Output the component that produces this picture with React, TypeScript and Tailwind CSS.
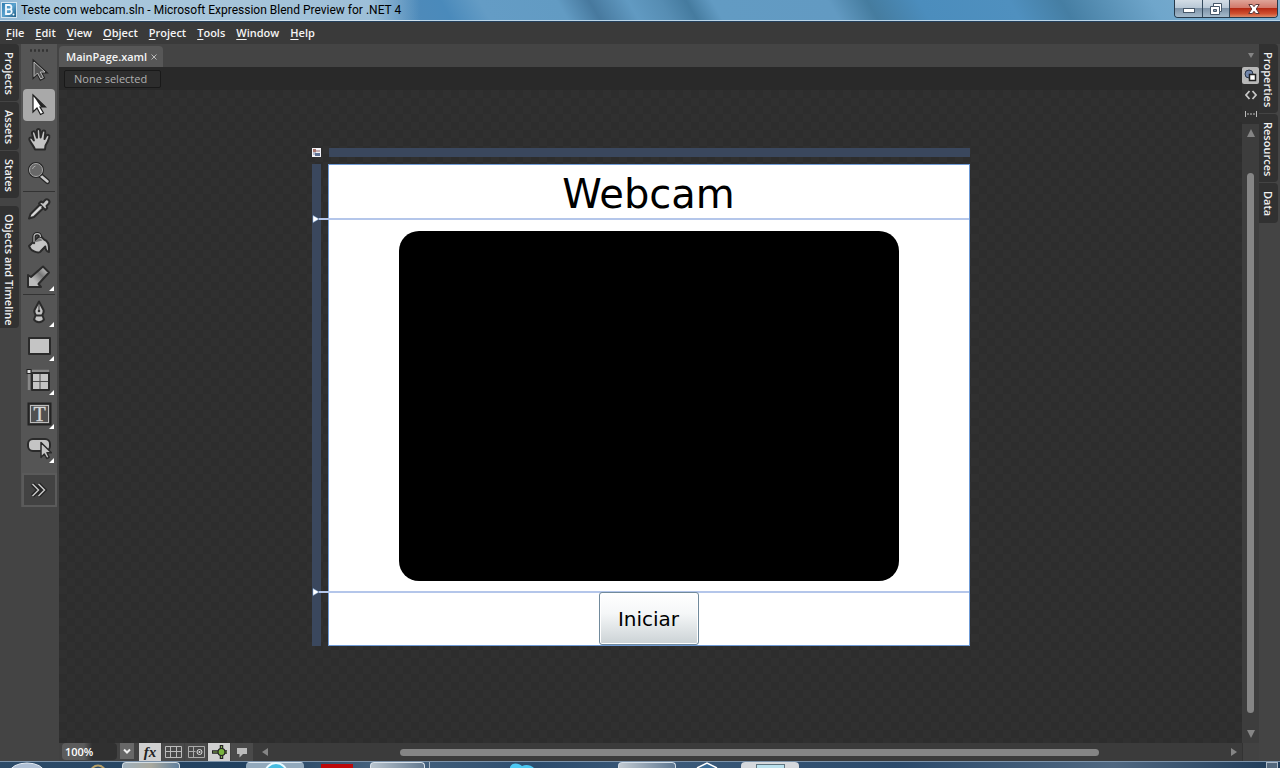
import type { ReactNode } from "react";

const menus = ["File", "Edit", "View", "Object", "Project", "Tools", "Window", "Help"];

const icon = { fill: "#c4c4c4", stroke: "#2a2a2a", strokeWidth: 2, strokeLinejoin: "round" as const };

function Icon({ children }: { children: ReactNode }) {
  return (
    <svg viewBox="0 0 26 26" className="size-[26px]" aria-hidden="true">
      {children}
    </svg>
  );
}

type ToolProps = { label: string; active?: boolean; more?: boolean; children: ReactNode };

function Tool({ label, active, more, children }: ToolProps) {
  return (
    <button
      aria-label={label}
      className={
        "relative my-px flex h-8 w-8 items-center justify-center rounded-sm " + (active ? "bg-[#a9a9a9]" : "")
      }
    >
      <Icon>{children}</Icon>
      {more && (
        <svg viewBox="0 0 5 5" className="absolute right-px bottom-0.5 size-[5px]" aria-hidden="true">
          <path d="M5 0V5H0z" fill="#fff" />
        </svg>
      )}
    </button>
  );
}

function SideTab({ label, className }: { label: string; className: string }) {
  return (
    <button
      className={
        "flex w-[19px] items-center justify-start bg-[#313131] pt-2 pr-0.5 text-[11px] leading-4 font-semibold text-[#f0f0f0] [writing-mode:vertical-rl] " +
        className
      }
    >
      {label}
    </button>
  );
}

function Arrow({ d }: { d: string }) {
  return (
    <svg viewBox="0 0 8 8" className="size-2" aria-hidden="true">
      <path d={d} fill="#858585" />
    </svg>
  );
}

function TitleBar() {
  return (
    <header className="relative flex h-[22px] shrink-0 items-start justify-between overflow-hidden border-b border-[#24405c] bg-[linear-gradient(60deg,#76a7cb_0%,#4d8aba_33%,#4a8abb_35%,#649cc5_38%,#629bc3_44%,#47799e_46.5%,#619ac2_49.5%,#568db3_52%,#457b9f_54%,#629bc3_56%,#629ac2_65%,#457c9f_68%,#4b8dbd_72%,#4f90bf_79%,#457ea3_83%,#6fa6cb_90%,#83b3d3_100%)] text-black">
      <div className="flex h-[21px] w-[420px] items-center gap-1 border-b border-[#cfe0ec] bg-[linear-gradient(90deg,#8fb6d3_0%,#a9c8dd_10%,#a6c4d9_60%,#9dbfd8_88%,transparent_100%)] pl-px">
        <svg viewBox="0 0 16 16" className="size-4" aria-hidden="true">
          <defs>
            <linearGradient id="app" x1="0" y1="0" x2="1" y2="1">
              <stop offset="0" stopColor="#2c79ad" />
              <stop offset=".5" stopColor="#5ba3cf" />
              <stop offset="1" stopColor="#1a577f" />
            </linearGradient>
          </defs>
          <rect x=".5" y=".5" width="15" height="15" fill="url(#app)" stroke="#d4e5f0" />
          <path
            d="M5 3h3.2a2.2 2.2 0 0 1 1 4.2A2.5 2.5 0 0 1 8.400 12H5zM5 7.300h3.500"
            fill="none"
            stroke="#f1f9ff"
            strokeWidth="1.800"
          />
          <circle cx="12.500" cy="12.500" r="1" fill="#fff" />
        </svg>
        <h1 className="[font-family:Roboto,'Open_Sans',sans-serif] text-[12px] leading-4 whitespace-nowrap">
          Teste com webcam.sln - Microsoft Expression Blend Preview for .NET 4
        </h1>
      </div>
      <div className="flex h-[21px] flex-1 justify-end border-b border-[#b9d3e6] pr-0.5">
        <div className="flex h-[18px] overflow-hidden rounded-b border border-t-0 border-[#26394a]">
          <button
            aria-label="Minimize"
            className="flex w-[28px] items-end justify-center border-r border-[#33495c] bg-[linear-gradient(#d3dde6_0,#b9c8d6_45%,#7e93a8_50%,#a5bacb_100%)] pb-1"
          >
            <svg viewBox="0 0 12 5" className="h-[5px] w-3" aria-hidden="true">
              <rect x=".5" y=".5" width="11" height="4" fill="#fff" stroke="#47586a" />
            </svg>
          </button>
          <button
            aria-label="Restore"
            className="flex w-[27px] items-center justify-center border-r border-[#33495c] bg-[linear-gradient(#d3dde6_0,#b9c8d6_45%,#7e93a8_50%,#a5bacb_100%)]"
          >
            <svg viewBox="0 0 12 12" className="size-3" aria-hidden="true">
              <path d="M3.500.5h8v8h-2v3h-9v-8h3z" fill="#fff" stroke="#47586a" />
              <path d="M3.500.5v3M9.500 8.500v-5h-6" fill="none" stroke="#47586a" />
              <path d="M3.500 6.500h3v2h-3z" fill="#8fa1b1" stroke="#47586a" />
            </svg>
          </button>
          <button
            aria-label="Close"
            className="flex w-[47px] items-center justify-center bg-[linear-gradient(#dfa498_0,#d2796a_45%,#b52a14_50%,#cf5030_80%,#db8a68_100%)]"
          >
            <svg viewBox="0 0 12 10" className="h-2.5 w-3" aria-hidden="true">
              <path
                d="M.8.5h3.500L6 2.700 7.700.5h3.500L8.200 5l3.100 4.500H7.700L6 7.300 4.300 9.500H.7L3.800 5z"
                fill="#fff"
                stroke="#5c3a3a"
              />
            </svg>
          </button>
        </div>
      </div>
    </header>
  );
}

function Toolbar() {
  const arrow = "M7 3v17l4-4 3.500 6.500 3-1.500-3.500-6h5.500z";
  return (
    <div className="ml-0.5 flex w-9 flex-col items-center self-start bg-[#555] pt-[5px]" role="toolbar" aria-label="Tools">
      <div className="mb-0.5 h-[3px] w-5 bg-[radial-gradient(circle_at_center,#333_1px,transparent_1.500px)] bg-[length:4px_3px]" />
      <Tool label="Selection">
        <path d="M8 4v14.500l3.500-3.500 3.200 6 2.600-1.400-3-5.600h4.700z" fill="#5a5a5a" stroke="#242424" strokeWidth="3" />
        <path d="M8 4v14.500l3.500-3.500 3.200 6 2.600-1.400-3-5.600h4.700z" fill="#555" stroke="#bbb" strokeWidth="1" />
      </Tool>
      <Tool label="Direct selection" active>
        <path d={arrow} fill="#fff" stroke="#1c1c1c" strokeWidth="1.200" />
        <path d="M7.500 4l11.500 11h-4z" fill="#222" />
      </Tool>
      <Tool label="Pan">
        <path
          d="M9 23.500C8 20.500 5.500 18 3.500 14c-.8-2.300 1.800-3.400 3-1.500l1.400 2L6 7.500c-.3-2.400 2.600-3 3.300-.7l1.700 5-.2-7c.2-2.400 3.100-2.400 3.300 0l.5 6.700 1.500-5.700c.8-2.100 3.500-1.500 3.200.7L18.500 13l1.700-3.200c1.200-1.800 3.700-.7 3.100 1.400-1 3.400-2.300 6-3.800 8.300l-.5 4z"
          {...icon}
        />
      </Tool>
      <Tool label="Zoom">
        <path d="m14 15 7.500 6.500" stroke="#262626" strokeWidth="5" strokeLinecap="round" />
        <path d="m15 16 6.500 5.500" stroke="#c9c9c9" strokeWidth="2.500" strokeLinecap="round" />
        <circle cx="10" cy="10" r="6.500" fill="#686868" stroke="#262626" strokeWidth="3" />
        <circle cx="10" cy="10" r="6.500" fill="#686868" stroke="#a9a9a9" strokeWidth="1" />
        <path d="M6.500 9a4 4 0 0 1 3-3" fill="none" stroke="#aaa" />
      </Tool>
      <hr className="h-0.5 w-8 border-0 border-b border-[#333] bg-[#555]" />
      <Tool label="Eyedropper">
        <path d="m3 22.500 1.500-4.500L14.500 8l3.500 3.500L8 21z" {...icon} />
        <path d="m13 7.500 2-2 2 1 2-2.300c2.200-2.400 6 .8 3.700 3.600l-2.200 2.200.8 2-2 2z" {...icon} />
        <path d="m5.500 20 10-10" stroke="#eee" />
      </Tool>
      <Tool label="Paint bucket">
        <path d="M8 12.500V7c0-4.500 6.500-4.500 6.500 0v3" fill="none" stroke="#222" strokeWidth="3.500" />
        <path
          d="M3 16 13 6.500c2.500.3 4 1.300 5 3 3.500.8 5.500 4.500 5 12.500-2.300-.3-3.500-2.500-3.700-5.500L14 22c-2.500 1.500-9.500-1-11-6z"
          {...icon}
        />
        <path d="M8 13V7c0-4.500 6.500-4.500 6.500 0" fill="none" stroke="#bbb" strokeWidth="1.200" />
        <path d="m8 12.500 4.500-4.500c1.500 0 3 1 4 2.500z" fill="#777" />
        <circle cx="8" cy="13" r="1.200" fill="#333" />
      </Tool>
      <Tool label="Gradient" more>
        <defs>
          <linearGradient id="brush" x1="0" y1="1" x2="1" y2="0">
            <stop offset=".3" stopColor="#bbb" />
            <stop offset=".6" stopColor="#777" />
            <stop offset="1" stopColor="#ddd" />
          </linearGradient>
        </defs>
        <path d="M2 23V11l3 2L17 2.500l6 6L12.500 20l2.500 3z" {...icon} fill="url(#brush)" />
      </Tool>
      <hr className="h-0.5 w-8 border-0 border-t border-[#333] bg-[#555]" />
      <Tool label="Pen" more>
        <path d="m13 1.500 4.500 8.500c.8 2-.5 4-1.500 5.500h-6c-1-1.500-2.300-3.500-1.500-5.500zM9.500 15.500h7l1.500 4c-2 3.500-8 3.500-10 0z" {...icon} />
        <path d="M13 3v7" stroke="#333" />
        <circle cx="13" cy="11" r="1.300" fill="#333" />
      </Tool>
      <Tool label="Rectangle" more>
        <rect x="3" y="4" width="21" height="16" {...icon} />
      </Tool>
      <Tool label="Grid" more>
        <path d="M3 5v17M6 3h17" stroke="#888" strokeWidth="2.500" />
        <rect x="6" y="5" width="17" height="17" {...icon} />
        <path d="M14 6v15M7 13.500h15" stroke="#4a4a4a" strokeWidth="1" />
        <rect x="1" y="1.500" width="4" height="4" fill="#ddd" stroke="#222" />
      </Tool>
      <Tool label="Text" more>
        <rect x="2.500" y="1.500" width="22" height="21" fill="#505050" stroke="#232323" strokeWidth="2" />
        <rect x="4.500" y="3.500" width="18" height="17" fill="none" stroke="#bdbdbd" />
        <text
          x="13.500"
          y="19"
          textAnchor="middle"
          fill="#d6d6d6"
          stroke="#d6d6d6"
          strokeWidth=".4"
          className="[font-family:'Liberation_Serif',serif] text-[20px]"
        >
          T
        </text>
      </Tool>
      <Tool label="Button" more>
        <rect x="2" y="3" width="22" height="12" rx="5" {...icon} />
        <path d="M15 6.500v15l3.300-3.500 2.500 4.500 2.400-1.200-2.200-4.600h4.500z" {...icon} strokeWidth="1.500" />
      </Tool>
      <button
        aria-label="Show all tools"
        className="mt-[7px] flex h-[34px] w-[35px] items-center justify-center border-2 border-[#5a5a5a] bg-[#424242]"
      >
        <Icon>
          <path d="m6.500 7 6 6-6 6M12.500 7l6 6-6 6" fill="none" stroke="#222" strokeWidth="4" />
          <path d="m6.500 7 6 6-6 6M12.500 7l6 6-6 6" fill="none" stroke="#c6c6c6" strokeWidth="1.500" />
        </Icon>
      </button>
    </div>
  );
}

function Artboard() {
  const handle = (
    <svg viewBox="0 0 8 8" className="size-2" aria-hidden="true">
      <path d="M1 .5 7 4 1 7.500z" fill="#fff" stroke="#7fa6d8" strokeWidth=".5" />
    </svg>
  );
  return (
    <div className="grid grid-cols-[9px_642px] grid-rows-[9px_482px] gap-x-[7px] gap-y-[7px]">
      <svg viewBox="0 0 9 9" className="size-[9px]" aria-hidden="true">
        <path d="M0 0h9v9H0z" fill="#f2f2f6" />
        <path d="M1 1h3v3H1z" fill="#a8746c" />
        <path d="M4 2h4v2H4z" fill="#c3aeb2" />
        <path d="M1 4h3v3H1z" fill="#b9bccb" />
        <path d="M3 5h5v3H3z" fill="#5f7294" />
      </svg>
      <div className="ml-px bg-[#3a475d]" />
      <div className="relative bg-[#3a475d]">
        <div className="absolute top-[51px] left-0">{handle}</div>
        <div className="absolute top-[424px] left-0">{handle}</div>
      </div>
      <div className="relative flex flex-col border border-[#6f9bd6] bg-white [font-family:'DejaVu_Sans',sans-serif] text-black">
        <div className="absolute top-[53px] -left-2.5 h-0.5 w-[650px] bg-[#b4c6ea]" />
        <div className="absolute top-[426px] -left-2.5 h-0.5 w-[650px] bg-[#b4c6ea]" />
        <h2 className="flex h-[54px] items-center justify-center pt-1 text-[40px] leading-[48px]">Webcam</h2>
        <div className="mx-auto mt-3 h-[350px] w-[500px] rounded-[20px] bg-black" />
        <button className="relative z-10 mx-auto mt-[11px] h-[53px] w-[100px] rounded-[3px] border border-[#718a9c] bg-[linear-gradient(#ffffff,#f5f7f8_40%,#cbd2d5)] text-[20px] leading-6 inset-ring inset-ring-white">
          Iniciar
        </button>
      </div>
    </div>
  );
}

function StatusBar() {
  return (
    <footer className="flex h-[18px] shrink-0 items-stretch bg-[#424242]">
      <div className="mr-[5px] ml-[3px] flex w-[72px] gap-[3px] text-white">
        <input
          aria-label="Zoom level"
          defaultValue="100%"
          className="h-[17px] min-w-0 flex-1 rounded bg-[linear-gradient(90deg,#5c5c5c_40%,#303030_55%)] pl-[3px] text-[11px] leading-4 font-semibold outline-none"
        />
        <button aria-label="Zoom presets" className="flex h-4 w-3.5 items-center justify-center bg-[#686868]">
          <svg viewBox="0 0 8 8" className="size-2" aria-hidden="true">
            <path d="m1 2.500 3 3 3-3" fill="none" stroke="#eee" strokeWidth="2" />
          </svg>
        </button>
      </div>
      <div className="flex gap-px">
        <button aria-label="Effects" className="flex w-[22px] items-center justify-center bg-[#d0d0d0]">
          <span className="[font-family:'Liberation_Serif',serif] text-[15px] leading-4 font-bold text-[#222] italic">
            fx
          </span>
        </button>
        <button aria-label="Show grid" className="flex w-[22px] items-center justify-center bg-[#494949]">
          <svg viewBox="0 0 17 12" className="h-3 w-[17px]" aria-hidden="true">
            <path d="M.5.5h16v11H.5zM.5 5.500h16M5.500.5v11M11.500.5v11" fill="none" stroke="#bbb" />
          </svg>
        </button>
        <button aria-label="Snap to grid" className="flex w-[22px] items-center justify-center bg-[#494949]">
          <svg viewBox="0 0 17 12" className="h-3 w-[17px]" aria-hidden="true">
            <path d="M.5.5h16v11H.5zM.5 5.500h7M5.500.5v11" fill="none" stroke="#aaa" />
            <circle cx="11.500" cy="6" r="2.500" fill="#444" stroke="#ddd" />
            <circle cx="11.500" cy="6" r="1" fill="#ddd" />
          </svg>
        </button>
        <button aria-label="Snap to snaplines" className="flex w-[22px] items-center justify-center bg-[#d0d0d0]">
          <svg viewBox="0 0 17 14" className="h-3.5 w-[17px]" aria-hidden="true">
            <path d="M1 7h15M10.500 0v14" stroke="#222" strokeWidth="3.500" />
            <path d="M2 7h14M10.500 1v12" stroke="#85ae55" strokeWidth="1.200" />
            <circle cx="10.500" cy="7" r="3.500" fill="#79b43e" stroke="#222" strokeWidth="1.200" />
          </svg>
        </button>
        <button aria-label="Annotations" className="flex w-[22px] items-center justify-center bg-[#4a4a4a]">
          <svg viewBox="0 0 12 11" className="h-[11px] w-3" aria-hidden="true">
            <path d="M1 1h10v6H7l-3.500 3.500V7H1z" fill="#bbb" />
          </svg>
        </button>
      </div>
      <div className="flex flex-1 items-center bg-[#3b3b3b] pr-1 pl-2">
        <Arrow d="M7 0v8L1 4z" />
        <div className="mx-1.5 flex-1">
          <div className="ml-[13.2%] h-[7px] w-[73.6%] rounded-full bg-[#858585]" />
        </div>
        <Arrow d="M1 0v8l6-4z" />
      </div>
      <div className="w-[17px] border-l border-[#333] bg-[#424242]" />
    </footer>
  );
}

function Taskbar() {
  return (
    <div className="relative flex h-[7px] shrink-0 items-stretch overflow-hidden border-t border-[#7d93aa] bg-[linear-gradient(90deg,#2d4b68,#20405f_20%,#48647f_30%,#2c4c6d_42%,#3c5a79_52%,#2b4a6b_70%,#4f6780_87%,#1d3a58)] pl-[10px]">
      <svg viewBox="0 0 112 6" className="h-1.5 w-28 shrink-0" aria-hidden="true">
        <ellipse cx="17" cy="10" rx="17" ry="9" fill="#aebfd4" stroke="#e7eef6" />
        <circle cx="88" cy="11" r="7.500" fill="none" stroke="#b6a069" strokeWidth="2" />
      </svg>
      <div className="w-[58px] rounded-t-sm border border-b-0 border-[#d2dce2] bg-[linear-gradient(90deg,#9fb0bc,#a9a99e_50%,#61809d)]" />
      <svg viewBox="0 0 58 6" className="ml-[66px] h-1.5 w-[58px] shrink-0 rounded-t-sm bg-[#92a9bc]" aria-hidden="true">
        <path d="M0 .5h58" stroke="#d9e3ec" />
        <circle cx="30" cy="12" r="11" fill="#46bce0" stroke="#e7f9ff" strokeWidth="2" />
      </svg>
      <div className="mt-0.5 ml-[17px] w-8 bg-[#bd0909]" />
      <div className="ml-[17px] w-[55px] rounded-t-sm border border-b-0 border-[#d9e1e9] bg-[linear-gradient(90deg,#b7c3cd,#647a90)]" />
      <div className="ml-0.5 w-[3px] border-r border-[#a5b5c6]" />
      <svg viewBox="0 0 24 6" className="ml-[80px] h-1.5 w-6 shrink-0" aria-hidden="true">
        <path d="M0 5c2-5 9-4 12-1 4-2 9-1 12 2H0z" fill="#4cc8f2" />
      </svg>
      <div className="ml-[84px] w-[58px] rounded-t-sm border border-b-0 border-[#d4dee8] bg-[linear-gradient(90deg,#c1c9d0,#5e7791)]" />
      <svg viewBox="0 0 24 6" className="ml-[19px] h-1.5 w-6 shrink-0" aria-hidden="true">
        <path d="M2 6 12 1l10 5" fill="#3c6c95" stroke="#fff" strokeWidth="1.500" />
      </svg>
      <div className="ml-[22px] flex w-[58px] justify-center rounded-t-sm bg-[#d5d8dc] pt-0.5">
        <div className="w-[29px] border border-b-0 border-[#607580] bg-[#bbe1ed]" />
      </div>
      <div className="mr-0.5 ml-auto w-3 border border-b-0 border-[#adbac8] bg-[#53687d]" />
    </div>
  );
}

export default function App() {
  return (
    <div className="flex h-screen flex-col overflow-hidden bg-[#444] [font-family:'Open_Sans','Noto_Sans',sans-serif] select-none">
      <TitleBar />
      <nav aria-label="Main menu" className="flex h-[22px] shrink-0 items-center gap-[11px] bg-[#3a3a3a] pl-1.5 text-[11px] leading-4 font-semibold text-[#f4f4f4]">
        {menus.map((m) => (
          <button key={m}>
            <span className="underline underline-offset-2">{m[0]}</span>
            {m.slice(1)}
          </button>
        ))}
      </nav>
      <main className="flex min-h-0 flex-1">
        <div className="flex flex-col gap-px">
          <SideTab label="Projects" className="h-[57px] rounded-r" />
          <SideTab label="Assets" className="h-12 rounded-r" />
          <SideTab label="States" className="h-[47px] rounded-r" />
          <SideTab label="Objects and Timeline" className="mt-[7px] h-[122px] rounded-r" />
        </div>
        <Toolbar />
        <section className="ml-0.5 flex min-w-0 flex-1 flex-col">
          <div className="flex min-h-0 flex-1">
            <div className="flex min-w-0 flex-1 flex-col">
              <div className="flex h-[23px] shrink-0 items-end">
                <div className="flex h-[21px] items-center gap-1 rounded-t bg-[#575757] pr-1.5 pl-[7px] text-[11px] leading-4 font-semibold text-[#f4f4f4]">
                  MainPage.xaml
                  <button aria-label="Close MainPage.xaml">
                    <svg viewBox="0 0 6 6" className="size-1.5" aria-hidden="true">
                      <path d="m.5.5 5 5m0-5-5 5" stroke="#bbb" />
                    </svg>
                  </button>
                </div>
              </div>
              <div className="flex h-[23px] shrink-0 items-center bg-[#292929] pl-[5px]">
                <button className="h-[18px] w-[97px] rounded-xs border border-[#191919] bg-[#2d2d2d] pl-[9px] text-left text-[11px] leading-4 text-[#b0b0b0]">
                  None selected
                </button>
              </div>
              <div className="flex min-h-0 flex-1 justify-center overflow-hidden bg-[repeating-conic-gradient(#2d2d2d_0_25%,#303030_0_50%)] bg-[length:16px_16px] pt-[58px] pr-5">
                <Artboard />
              </div>
            </div>
            <div className="flex w-[17px] flex-col items-center bg-[#303030]">
              <button aria-label="Open documents" className="flex h-[23px] w-full items-center justify-center bg-[#444]">
                <Arrow d="M1 1h6L4 6z" />
              </button>
              <button aria-label="Design view" className="flex h-[17px] w-[17px] items-center justify-center rounded-xs bg-[#b8b8b8]">
                <svg viewBox="0 0 13 13" className="size-[13px]" aria-hidden="true">
                  <circle cx="5" cy="5" r="4" fill="#7286ab" stroke="#283448" />
                  <path d="M5.500 5.500h6v6h-6z" fill="#fff" stroke="#222" strokeWidth="1.500" />
                </svg>
              </button>
              <button aria-label="XAML view" className="flex h-[21px] w-full items-center justify-center">
                <svg viewBox="0 0 12 10" className="h-2.5 w-3" aria-hidden="true">
                  <path d="M4.500 1 1 5l3.500 4M7.500 1 11 5 7.500 9" fill="none" stroke="#c8c8c8" strokeWidth="1.800" />
                </svg>
              </button>
              <button aria-label="Split view" className="flex h-[17px] w-full items-center justify-center">
                <svg viewBox="0 0 12 6" className="h-1.5 w-3" aria-hidden="true">
                  <path d="M.5 0v6M11.500 0v6" stroke="#bbb" />
                  <path d="M2 3h8" stroke="#bbb" strokeDasharray="2 1" />
                </svg>
              </button>
              <div className="mt-0.5 flex w-full flex-1 flex-col items-center bg-[#3d3d3d] py-[5px]">
                <Arrow d="M4 0 8 8H0z" />
                <div className="my-1 flex w-full flex-1 flex-col items-center">
                  <div className="h-[5.5%]" />
                  <div className="h-[92.3%] w-[7px] rounded-full bg-[#858585]" />
                </div>
                <Arrow d="M0 0h8L4 8z" />
              </div>
            </div>
          </div>
          <StatusBar />
        </section>
        <div className="mr-0.5 flex flex-col gap-px">
          <SideTab label="Properties" className="h-[69px] rounded-r" />
          <SideTab label="Resources" className="h-[68px] rounded-r" />
          <SideTab label="Data" className="h-10 rounded-r" />
        </div>
      </main>
      <Taskbar />
    </div>
  );
}
